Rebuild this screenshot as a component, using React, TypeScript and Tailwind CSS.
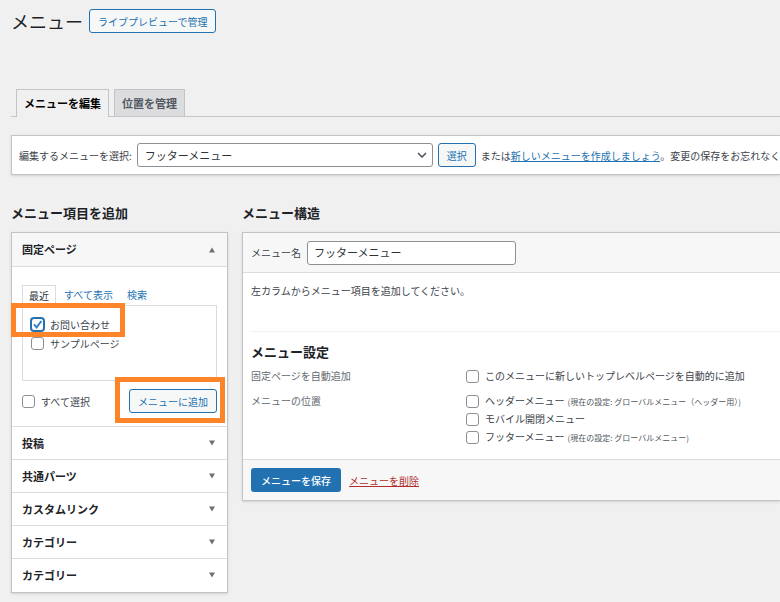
import { useState } from "react";
import clsx from "clsx";

const accordions = ["投稿", "共通パーツ", "カスタムリンク", "カテゴリー", "カテゴリー"];

const locations = [
  { id: "header", name: "ヘッダーメニュー", current: "(現在の設定: グローバルメニュー（ヘッダー用）)" },
  { id: "mobile", name: "モバイル開閉メニュー", current: "" },
  { id: "footer", name: "フッターメニュー", current: "(現在の設定: グローバルメニュー)" },
];

type CheckProps = {
  id: string;
  label: string;
  note?: string;
  initial?: boolean;
  className?: string;
};

function Check({ id, label, note, initial = false, className }: CheckProps) {
  const [checked, setChecked] = useState(initial);

  return (
    <div className={clsx("flex items-center gap-1.5", className)}>
      <span className="relative flex shrink-0">
        <input
          id={id}
          type="checkbox"
          checked={checked}
          onChange={(e) => setChecked(e.target.checked)}
          className="size-[13px] appearance-none rounded-[3px] border border-[#8c8f94] bg-white checked:border-[#2271b1] checked:ring-1 checked:ring-[#2271b1]"
        />
        {checked && (
          <svg viewBox="0 0 13 13" className="pointer-events-none absolute inset-0 size-[13px]" fill="none" stroke="#3582c4" strokeWidth="2">
            <path d="M3 6.4 5.6 9.4 10.4 3" />
          </svg>
        )}
      </span>
      <label htmlFor={id} className="whitespace-nowrap">
        {label}
        {note && <span className="ml-[3px] text-[8px] text-[#50575e]">{note}</span>}
      </label>
    </div>
  );
}

function OutlineButton({ children, className }: { children: string; className?: string }) {
  return (
    <button
      type="button"
      className={clsx("shrink-0 whitespace-nowrap rounded-[3px] border border-[#2271b1] bg-[#f6f7f7] px-2 text-[10px] text-[#2271b1]", className)}
    >
      {children}
    </button>
  );
}

function Arrow({ up = false }: { up?: boolean }) {
  return (
    <svg viewBox="0 0 8 6" className="h-1.5 w-2 fill-[#6c7075]">
      {up ? <path d="M4 0.5 7 5.5H1z" /> : <path d="M4 5.5 7 0.5H1z" />}
    </svg>
  );
}

function AddItems() {
  return (
    <section className="w-[217px] shrink-0">
      <h2 className="text-[13px] font-bold leading-5 text-[#1d2327]">メニュー項目を追加</h2>
      <div className="mt-[9px] border border-[#c3c4c7] bg-white pb-px shadow-sm">
        <h3 className="bg-[#f7f7f7]">
          <button type="button" className="flex h-[33px] w-full items-center justify-between pl-2.5 pr-[11px] text-[11px] font-bold text-[#1d2327]">
            固定ページ
            <Arrow up />
          </button>
        </h3>

        <div className="border-t border-[#dcdcde] px-2.5 pb-[13px] pt-[18px]">
          <div className="flex text-[10px] leading-5">
            <a href="#recent" className="-mb-px border border-b-0 border-[#dcdcde] bg-white px-1.5 text-[#2c3338]">最近</a>
            <a href="#all" className="px-2 text-[#2271b1]">すべて表示</a>
            <a href="#search" className="px-1.5 text-[#2271b1]">検索</a>
          </div>
          <div className="h-[76px] border border-[#dcdcde] px-2 pt-[9px]">
            <div className="relative">
              <Check id="page-contact" label="お問い合わせ" initial className="h-[18px]" />
              <span className="pointer-events-none absolute -left-5 -top-3 h-[34px] w-[114px] border-[5px] border-[#fd8429]" />
            </div>
            <Check id="page-sample" label="サンプルページ" className="h-5" />
          </div>
          <div className="mt-2 flex items-center justify-between">
            <Check id="select-all" label="すべて選択" />
            <div className="relative flex">
              <OutlineButton className="h-6">メニューに追加</OutlineButton>
              <span className="pointer-events-none absolute -bottom-[10px] -left-[14px] -right-2 -top-3 border-[5px] border-[#fd8429]" />
            </div>
          </div>
        </div>

        {accordions.map((title, i) => (
          <h3 key={i} className="border-t border-[#dcdcde]">
            <button type="button" className="flex h-8 w-full items-center justify-between pl-2.5 pr-[11px] text-[11px] font-bold text-[#1d2327]">
              {title}
              <Arrow />
            </button>
          </h3>
        ))}
      </div>
    </section>
  );
}

function MenuStructure() {
  return (
    <section className="min-w-0 flex-1">
      <h2 className="text-[13px] font-bold leading-5 text-[#1d2327]">メニュー構造</h2>
      <form className="mt-[9px] border border-r-0 border-[#c3c4c7] bg-white shadow-sm" onSubmit={(e) => e.preventDefault()}>
        <div className="flex h-10 items-center gap-1.5 border-b border-[#dcdcde] bg-[#f7f7f7] px-2">
          <label htmlFor="menu-name" className="whitespace-nowrap">メニュー名</label>
          <input
            id="menu-name"
            defaultValue="フッターメニュー"
            className="h-6 w-[209px] rounded-[3px] border border-[#8c8f94] bg-white px-1.5 pb-0.5 text-[11px] text-[#2c3338]"
          />
        </div>

        <div className="pb-[13px] pl-2">
          <p className="pt-2.5 leading-4">左カラムからメニュー項目を追加してください。</p>
          <div className="mt-8 border-t border-[#f0f0f1] pt-2.5">
            <h3 className="text-[13px] font-bold leading-5 text-[#1d2327]">メニュー設定</h3>
            <fieldset className="mt-[5px] flex leading-[18px]">
              <legend className="float-left w-[215px] text-[#646970]">固定ページを自動追加</legend>
              <Check id="auto-add" label="このメニューに新しいトップレベルページを自動的に追加" />
            </fieldset>
            <fieldset className="mt-[7px] flex leading-[18px]">
              <legend className="float-left w-[215px] text-[#646970]">メニューの位置</legend>
              <div>
                {locations.map((l) => (
                  <Check key={l.id} id={l.id} label={l.name} note={l.current} className="h-[18px]" />
                ))}
              </div>
            </fieldset>
          </div>
        </div>

        <div className="flex h-[41px] items-center gap-2 border-t border-[#dcdcde] bg-[#f7f7f7] px-2">
          <button type="submit" className="h-6 rounded-[3px] bg-[#2271b1] px-2.5 text-[10px] font-medium text-white">
            メニューを保存
          </button>
          <a href="#delete" className="text-[#b32d2e] underline">メニューを削除</a>
        </div>
      </form>
    </section>
  );
}

export default function App() {
  return (
    <main className="min-h-screen overflow-hidden bg-[#f0f0f1] pb-2 pl-[11px] font-['Noto_Sans_CJK_JP',sans-serif] text-[10px] text-[#3c434a]">
      <header className="flex items-center gap-1.5 pt-[9px]">
        <h1 className="text-[18px] leading-6 text-[#1d2327]">メニュー</h1>
        <OutlineButton className="h-6">ライブプレビューで管理</OutlineButton>
      </header>

      <nav className="mt-14 flex gap-[5px] border-b border-[#c3c4c7] pl-[5px] text-[11px] font-bold leading-[26px]">
        <a href="#edit" className="-mb-px border border-b-0 border-[#c3c4c7] bg-[#f0f0f1] px-[7px] pb-px text-black">メニューを編集</a>
        <a href="#locations" className="border border-b-0 border-[#c3c4c7] bg-[#dcdcde] px-[7px] text-[#50575e]">位置を管理</a>
      </nav>

      <div className="mt-[18px] flex h-10 items-center gap-[5px] whitespace-nowrap border border-r-0 border-[#c3c4c7] bg-white pl-[7px] shadow-sm">
        <label htmlFor="menu-select">編集するメニューを選択:</label>
        <span className="relative flex shrink-0">
          <select id="menu-select" className="h-6 w-[296px] appearance-none rounded-[3px] border border-[#8c8f94] bg-white pl-[7px] pr-6 text-[11px] text-[#2c3338]">
            <option>フッターメニュー</option>
          </select>
          <svg viewBox="0 0 10 6" className="pointer-events-none absolute right-1.5 top-[9px] h-1.5 w-2.5" fill="none" stroke="#50575e" strokeWidth="1.6">
            <path d="M1 1 5 5 9 1" />
          </svg>
        </span>
        <OutlineButton className="h-6">選択</OutlineButton>
        <span>
          または<a href="#new" className="text-[#2271b1] underline">新しいメニューを作成しましょう</a>。変更の保存をお忘れなく
        </span>
      </div>

      <div className="mt-7 flex items-start gap-3.5">
        <AddItems />
        <MenuStructure />
      </div>
    </main>
  );
}
